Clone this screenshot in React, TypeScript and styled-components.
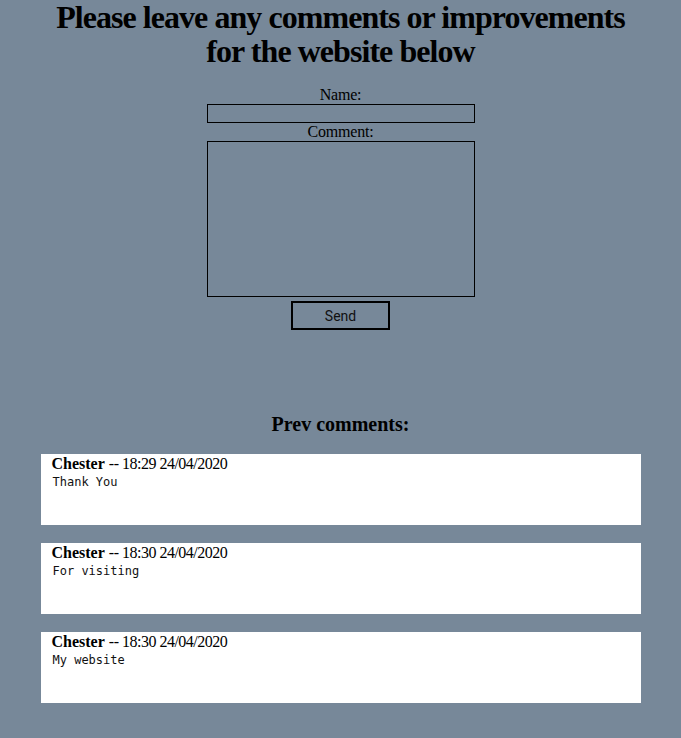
import React from "react";
import styled, { createGlobalStyle } from "styled-components";

const Global = createGlobalStyle`
  html, body { margin: 0; padding: 0; background: #778899; }
  body { font-family: "Liberation Serif", "Times New Roman", serif; color: #000; }
`;

const Page = styled.div`
  display: flex;
  flex-direction: column;
  align-items: center;
  min-height: 738px;
`;

const Title = styled.h1`
  margin: 0;
  width: 600px;
  font-size: 32px;
  line-height: 34px;
  letter-spacing: -0.95px;
  font-weight: bold;
  text-align: center;
`;

const Form = styled.form`
  display: flex;
  flex-direction: column;
  align-items: center;
  margin-top: 18px;
  width: 268px;
`;

const Label = styled.label`
  font-size: 16px;
  line-height: 18px;
  letter-spacing: -0.2px;
`;

const TextInput = styled.input`
  box-sizing: border-box;
  width: 268px;
  height: 19px;
  margin: 0;
  border: 1px solid #000;
  background: transparent;
  padding: 0 2px;
`;

const TextArea = styled.textarea`
  box-sizing: border-box;
  width: 268px;
  height: 156px;
  margin: 0;
  border: 1px solid #000;
  background: transparent;
  resize: none;
  display: block;
`;

const SendButton = styled.button`
  box-sizing: border-box;
  margin-top: 4px;
  width: 99px;
  height: 29px;
  border: 2px solid #000;
  background: transparent;
  font-family: Roboto, "Liberation Sans", Arial, sans-serif;
  font-size: 14px;
  color: #111;
  cursor: pointer;
`;

const SectionTitle = styled.h3`
  margin: 82px 0 0;
  font-size: 20px;
  line-height: 24px;
  font-weight: bold;
  text-align: center;
`;

const List = styled.div`
  display: flex;
  flex-direction: column;
  gap: 18px;
  margin-top: 18px;
  width: 600px;
`;

const Card = styled.div`
  box-sizing: border-box;
  background: #fff;
  height: 71px;
  padding: 0 11px;
`;

const Header = styled.div`
  font-size: 16px;
  line-height: 19px;
`;

const Author = styled.b`
  font-weight: bold;
`;

const Time = styled.span`
  letter-spacing: -0.5px;
`;

const Message = styled.div`
  font-family: "DejaVu Sans Mono", "Liberation Mono", monospace;
  font-size: 12px;
  line-height: 18px;
  padding-left: 1px;
  color: #111;
`;

const comments = [
  { name: "Chester", time: "18:29 24/04/2020", text: "Thank You" },
  { name: "Chester", time: "18:30 24/04/2020", text: "For visiting" },
  { name: "Chester", time: "18:30 24/04/2020", text: "My website" },
];

export default function App() {
  return (
    <>
      <Global />
      <Page>
        <Title>Please leave any comments or improvements for the website below</Title>
        <Form onSubmit={(e) => e.preventDefault()}>
          <Label htmlFor="name">Name:</Label>
          <TextInput id="name" type="text" />
          <Label htmlFor="comment">Comment:</Label>
          <TextArea id="comment" />
          <SendButton type="submit">Send</SendButton>
        </Form>
        <SectionTitle>Prev comments:</SectionTitle>
        <List>
          {comments.map((c, i) => (
            <Card key={i}>
              <Header>
                <Author>{c.name}</Author> <Time>-- {c.time}</Time>
              </Header>
              <Message>{c.text}</Message>
            </Card>
          ))}
        </List>
      </Page>
    </>
  );
}
